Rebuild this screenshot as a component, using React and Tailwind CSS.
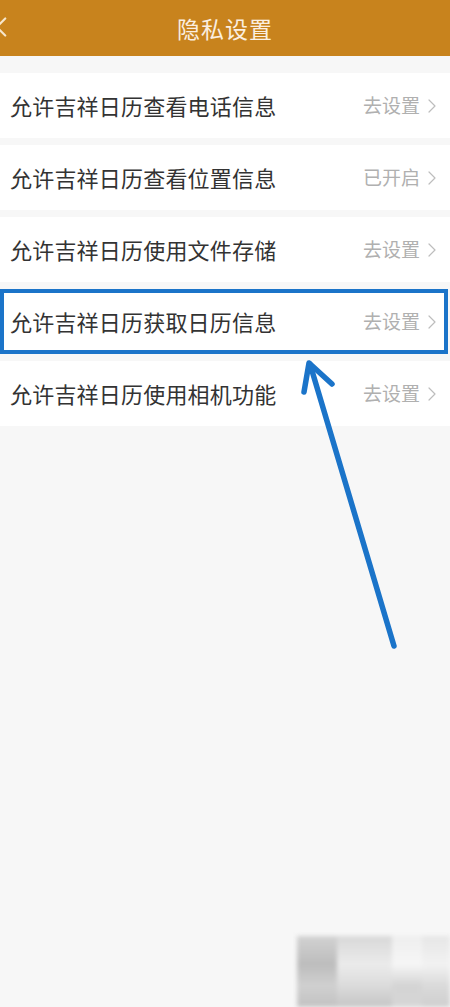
import { ChevronLeft, ChevronRight } from 'lucide-react'

const rows = [
  { label: '允许吉祥日历查看电话信息', status: '去设置' },
  { label: '允许吉祥日历查看位置信息', status: '已开启' },
  { label: '允许吉祥日历使用文件存储', status: '去设置' },
  { label: '允许吉祥日历获取日历信息', status: '去设置', marked: true },
  { label: '允许吉祥日历使用相机功能', status: '去设置' },
]

const font = { fontFamily: '"Noto Sans CJK SC", "Noto Sans", sans-serif' }

function Row({ row }) {
  return (
    <div
      className={
        row.marked
          ? 'h-[65px] bg-white flex items-center justify-between border-[4px] border-[#1b74c9] pl-[6px] pr-[4px] mr-[2px]'
          : 'h-[65px] bg-white flex items-center justify-between pl-[10px] pr-[10px]'
      }
    >
      <span className="text-[22px] text-[#333333] tracking-[0.2px]">{row.label}</span>
      <span className="flex items-center text-[19px] text-[#b0b0b0]">
        {row.status}
        <ChevronRight size={24} strokeWidth={1.2} className="text-[#bdbdbd] -mr-[4px]" />
      </span>
    </div>
  )
}

export default function App() {
  return (
    <div className="relative min-h-screen bg-[#f7f7f7] overflow-hidden" style={font}>
      {/* Header */}
      <div className="relative h-[56px] bg-[#c8831d] flex items-center justify-center">
        <ChevronLeft size={34} strokeWidth={1.5} className="absolute left-[-16px] top-[10px] text-[#f6e6cc]" />
        <span className="text-[23px] text-[#fbefe0] tracking-[1px]">隐私设置</span>
      </div>

      {/* List */}
      <div className="pt-[17px] flex flex-col gap-[7px]">
        {rows.map(row => (
          <Row key={row.label} row={row} />
        ))}
      </div>

      {/* Annotation arrow */}
      <svg className="absolute left-0 top-0 pointer-events-none" width="450" height="1007">
        <g stroke="#1b74c9" strokeWidth="5.5" strokeLinecap="round" strokeLinejoin="round" fill="none">
          <line x1="394" y1="646" x2="310" y2="364" />
          <polyline points="304,392 309,363 332,384" />
        </g>
      </svg>

      {/* Blurred watermark */}
      <div className="absolute right-0 bottom-0 w-[153px] h-[71px] flex blur-[2px]">
        <div className="w-[40px] h-full bg-[linear-gradient(180deg,#d2d2d2,#bdbdbd_40%,#d0d0d0_70%,#c2c2c2)]" />
        <div className="w-[55px] h-full bg-[linear-gradient(180deg,#d8d8d8,#ebebeb_40%,#dedede_65%,#c6c6c6)]" />
        <div className="w-[30px] h-full bg-[linear-gradient(180deg,#eeeeee,#f6f6f6_40%,#d4d4d4_70%,#d6d6d6)]" />
        <div className="flex-1 h-full bg-[linear-gradient(180deg,#e6e6e6,#f2f2f2_40%,#dadada_70%,#cfcfcf)]" />
      </div>
    </div>
  )
}
